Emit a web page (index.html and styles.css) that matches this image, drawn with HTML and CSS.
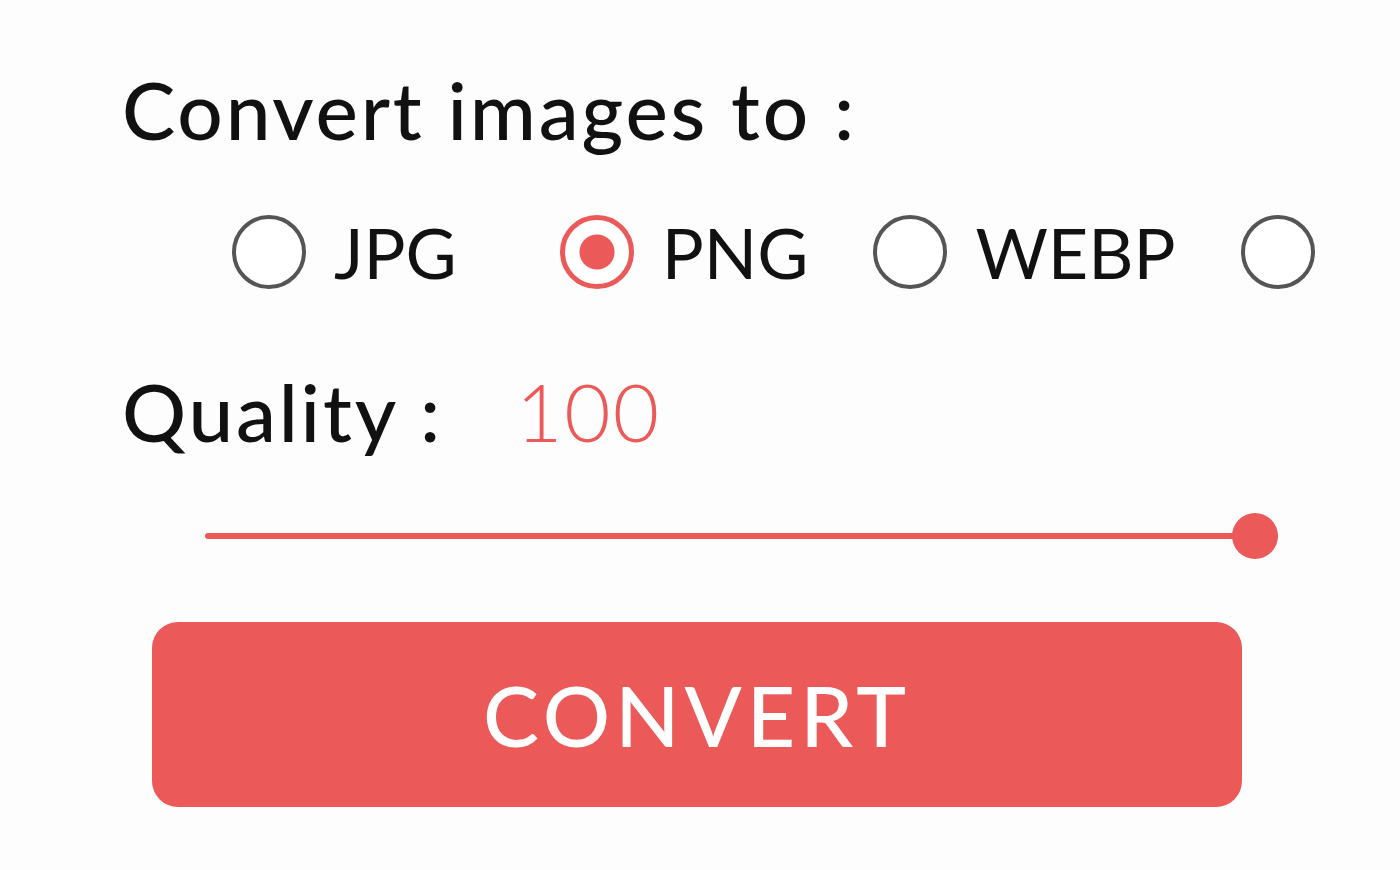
FILE: index.html
```html
<!DOCTYPE html>
<html lang="en">
<head>
  <meta charset="UTF-8">
  <title>Image Converter</title>
  <link rel="stylesheet" href="styles.css">
</head>
<body>

  <div class="converter">
    <p class="label">Convert images to :</p>

    <div class="formats">
      <label class="format format-jpg"><input type="radio" name="format" value="jpg"> JPG</label>
      <label class="format"><input type="radio" name="format" value="png" checked> PNG</label>
      <label class="format"><input type="radio" name="format" value="webp"> WEBP</label>
      <label class="format"><input type="radio" name="format" value="gif" aria-label="GIF"></label>
    </div>

    <div class="quality">
      <span class="label">Quality :</span>
      <span id="qualityValue">100</span>
    </div>

    <input type="range" id="quality" min="1" max="100" value="100" oninput="document.getElementById('qualityValue').textContent = this.value">

    <button class="convertBtn">CONVERT</button>
  </div>

</body>
</html>
```

FILE: styles.css
```css
* { margin: 0; padding: 0; box-sizing: border-box; }

body {
  font-family: 'Lato', sans-serif;
  background: #fdfdfd;
  color: #111;
  overflow: hidden;
}

.converter {
  width: 1400px;
  padding: 64px 0 0 122px;
}

.label {
  font-size: 80px;
  font-weight: 500;
  line-height: 90px;
  letter-spacing: 2.8px;
}

.formats {
  display: flex;
  align-items: center;
  gap: 65px;
  margin: 56px 0 0 110px;
}

.format {
  display: flex;
  align-items: center;
  gap: 28px;
  font-size: 70px;
  flex-shrink: 0;
}

.format-jpg { margin-right: 38px; }

.format input {
  appearance: none;
  width: 74px;
  height: 74px;
  border: 4px solid #555;
  border-radius: 50%;
  background: #fff;
  margin: 0;
}

.format input:checked {
  border: 5px solid #eb5a58;
  background: radial-gradient(circle, #eb5a58 0 17px, #fff 18px);
}

.quality {
  display: flex;
  align-items: baseline;
  gap: 73px;
  margin-top: 69px;
}

#qualityValue {
  font-size: 80px;
  font-weight: 300;
  letter-spacing: 2px;
  color: #eb5a58;
}

#quality {
  appearance: none;
  display: block;
  width: 1073px;
  height: 46px;
  margin: 54px 0 0 83px;
  background: transparent;
}

#quality::-webkit-slider-runnable-track {
  height: 6px;
  background: #eb5a58;
  border-radius: 3px;
}

#quality::-webkit-slider-thumb {
  appearance: none;
  width: 46px;
  height: 46px;
  margin-top: -20px;
  border-radius: 50%;
  background: #eb5a58;
  border: none;
}

.convertBtn {
  display: block;
  width: 1090px;
  height: 185px;
  margin: 63px 0 0 30px;
  border: none;
  border-radius: 26px;
  background: #eb5a58;
  color: #fff;
  font-family: 'Lato', sans-serif;
  font-size: 84px;
  font-weight: 500;
  letter-spacing: 5px;
  cursor: pointer;
}
```
